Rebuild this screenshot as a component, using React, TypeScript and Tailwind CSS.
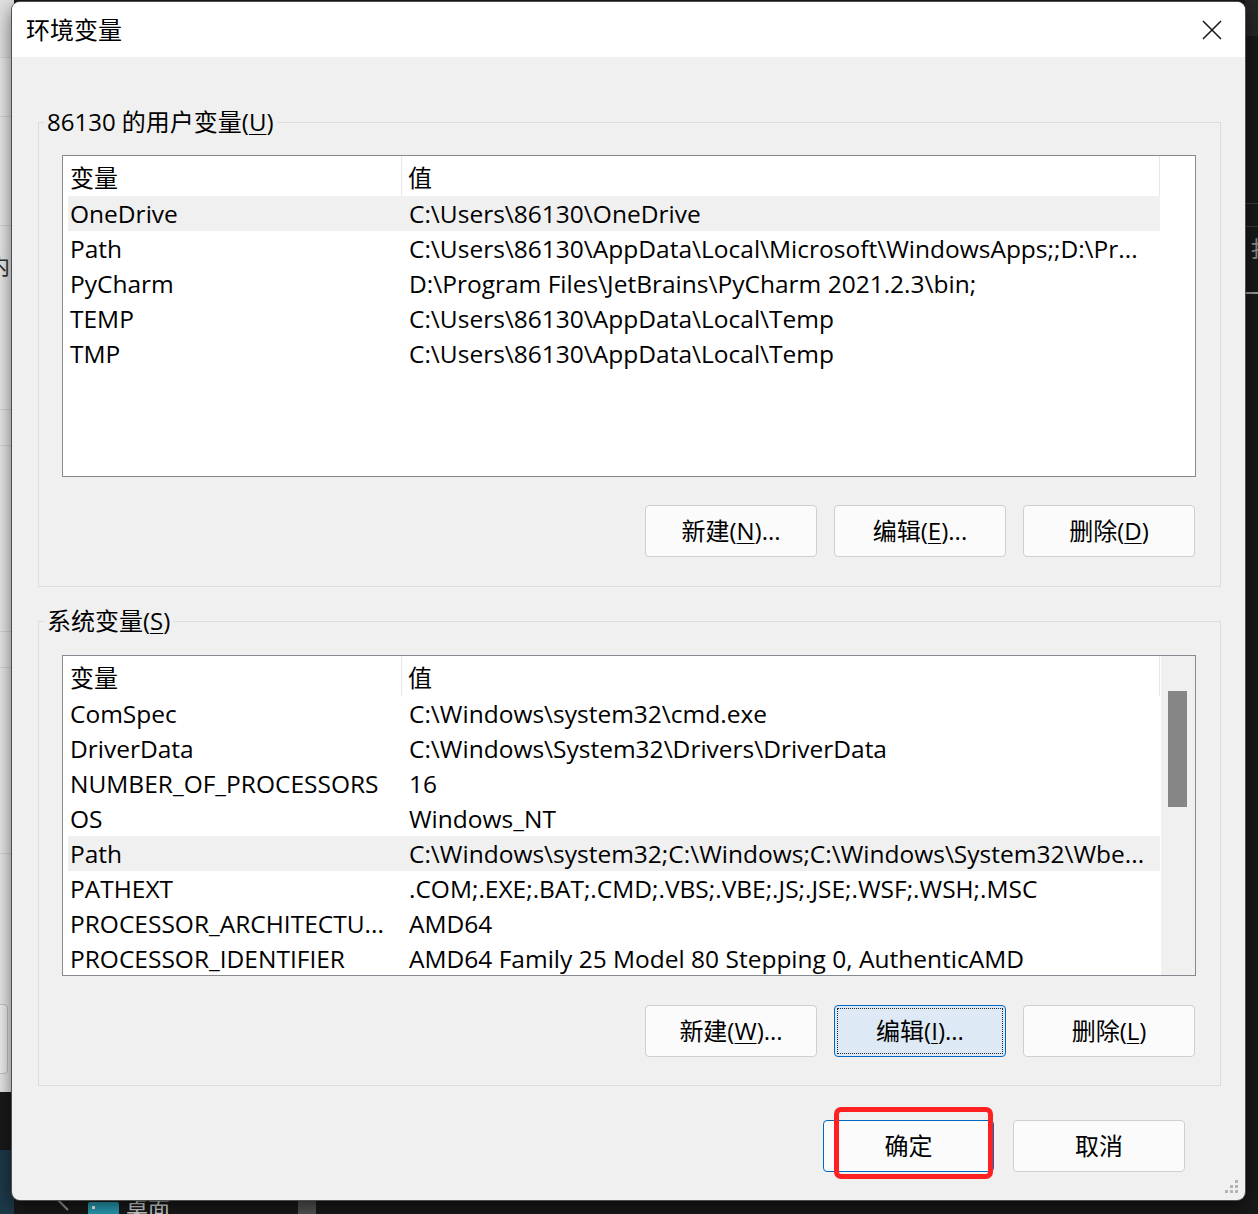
import React from 'react'

const ui = "font-['Open_Sans','Noto_Sans_CJK_SC',sans-serif]"

type Row = { name: string; value: string; selected?: boolean }

const userRows: Row[] = [
  { name: 'OneDrive', value: 'C:\\Users\\86130\\OneDrive', selected: true },
  { name: 'Path', value: 'C:\\Users\\86130\\AppData\\Local\\Microsoft\\WindowsApps;;D:\\Pr...' },
  { name: 'PyCharm', value: 'D:\\Program Files\\JetBrains\\PyCharm 2021.2.3\\bin;' },
  { name: 'TEMP', value: 'C:\\Users\\86130\\AppData\\Local\\Temp' },
  { name: 'TMP', value: 'C:\\Users\\86130\\AppData\\Local\\Temp' },
]

const systemRows: Row[] = [
  { name: 'ComSpec', value: 'C:\\Windows\\system32\\cmd.exe' },
  { name: 'DriverData', value: 'C:\\Windows\\System32\\Drivers\\DriverData' },
  { name: 'NUMBER_OF_PROCESSORS', value: '16' },
  { name: 'OS', value: 'Windows_NT' },
  { name: 'Path', value: 'C:\\Windows\\system32;C:\\Windows;C:\\Windows\\System32\\Wbe...', selected: true },
  { name: 'PATHEXT', value: '.COM;.EXE;.BAT;.CMD;.VBS;.VBE;.JS;.JSE;.WSF;.WSH;.MSC' },
  { name: 'PROCESSOR_ARCHITECTU...', value: 'AMD64' },
  { name: 'PROCESSOR_IDENTIFIER', value: 'AMD64 Family 25 Model 80 Stepping 0, AuthenticAMD' },
]

function Key({ children }: { children: React.ReactNode }) {
  return <span className="underline decoration-1 underline-offset-[3px]">{children}</span>
}

function Btn({
  children,
  kind = 'normal',
  width = 'w-[172px]',
}: {
  children: React.ReactNode
  kind?: 'normal' | 'focus' | 'default'
  width?: string
}) {
  const skin =
    kind === 'focus'
      ? 'border-[#0067c0] bg-[#dde9f4]'
      : kind === 'default'
        ? 'border-[#0067c0] bg-[#fbfbfb]'
        : 'border-[#cfcfcf] bg-[#fbfbfb]'
  return (
    <button
      className={`relative flex h-[52px] ${width} items-center justify-center rounded-[4px] border text-[24px] text-black ${skin}`}
    >
      {kind === 'focus' && (
        <span className="pointer-events-none absolute inset-[2px] border border-dotted border-[#222]" />
      )}
      <span>{children}</span>
    </button>
  )
}

function ListView({ rows, height, scroll = false }: { rows: Row[]; height: string; scroll?: boolean }) {
  return (
    <div className={`flex ${height} w-[1134px] overflow-hidden border border-[#858a91] bg-white`}>
      <div className="flex-1 pl-[5px]">
        <div className="w-[1092px]">
          <div className="flex h-[40px] items-center border-r border-[#e8e8e8] text-[24px]">
            <div className="flex h-full w-[334px] items-center border-r border-[#e8e8e8] pl-[2px] pt-[3px]">变量</div>
            <div className="pl-[6px] pt-[3px]">值</div>
          </div>
          {rows.map((r) => (
            <div
              key={r.name}
              className={`flex h-[35px] items-center whitespace-nowrap pt-[2px] text-[24.5px] ${r.selected ? 'bg-[#f0f0f0]' : ''}`}
            >
              <div className="w-[339px] pl-[2px]">{r.name}</div>
              <div className="pl-[2px]">{r.value}</div>
            </div>
          ))}
        </div>
      </div>
      {scroll && (
        <div className="w-[34px] shrink-0 bg-[#f0f0f0] pl-[7px] pt-[35px]">
          <div className="h-[116px] w-[19px] bg-[#868686]" />
        </div>
      )}
    </div>
  )
}

function Group({
  legend,
  children,
  className = '',
}: {
  legend: React.ReactNode
  children: React.ReactNode
  className?: string
}) {
  return (
    <fieldset className={`border border-[#dcdcdc] ${className}`}>
      <legend className="ml-[5px] px-[3px] text-[24px] leading-[30px]">{legend}</legend>
      {children}
    </fieldset>
  )
}

export default function App() {
  return (
    <div className={`relative h-[1214px] w-[1258px] overflow-hidden bg-[#191919] text-black ${ui}`}>
      {/* window behind, left */}
      <div className="absolute left-0 top-0 h-[1092px] w-[14px] overflow-hidden bg-[#eaeaea]">
        <div className="h-[58px] border-b border-[#d6d6d6] bg-[#e2e2e2]" />
        <div className="mt-[58px] border-t border-[#d6d6d6]" />
        <div className="relative mt-[108px] h-[60px] border-t border-[#d6d6d6]">
          <span className="absolute -left-[12px] top-[28px] text-[22px] leading-none text-[#333]">内</span>
        </div>
        <div className="mt-[124px] border-t border-[#d6d6d6]" />
        <div className="mt-[35px] border-t border-[#d6d6d6]" />
        <div className="mt-[185px] border-t border-[#d6d6d6]" />
        <div className="mt-[35px] border-t border-[#d6d6d6]" />
        <div className="mt-[185px] border-t border-[#d6d6d6]" />
        <div className="-ml-[4px] mt-[150px] h-[70px] w-[12px] rounded-[4px] border border-[#c4c4c4] bg-[#f2f2f2]" />
      </div>
      <div className="absolute left-0 top-[1150px] h-[64px] w-[14px] bg-[#1d3a4a]" />

      {/* window behind, right */}
      <div className="absolute right-0 top-0 h-[36px] w-[13px] bg-[#262626]" />
      <div className="absolute right-0 top-[203px] w-[13px] border-t border-[#3a3a3a]" />
      <div className="absolute right-0 top-[226px] h-[66px] w-[13px] overflow-hidden border-t border-[#3a3a3a]">
        <span className="absolute left-[5px] top-[10px] text-[22px] leading-none text-[#8a8a8a]">扌</span>
      </div>
      <div className="absolute right-0 top-[292px] h-[2px] w-[13px] bg-[#9a9a9a]" />

      {/* taskbar strip */}
      <div className="absolute left-[56px] top-[1204px] h-[2px] w-[14px] rotate-45 bg-[#9a9a9a]" />
      <div className="absolute left-[88px] top-[1202px] h-[14px] w-[31px] rounded-t-[2px] bg-[#2aa0b8]">
        <div className="ml-[4px] mt-[4px] h-[3px] w-[3px] bg-white" />
      </div>
      <span className="absolute left-[126px] top-[1197px] text-[22px] leading-none text-[#d8d8d8]">桌面</span>
      <div className="absolute left-[298px] top-[1200px] h-[14px] w-[18px] bg-[#555]" />

      {/* dialog */}
      <div className="absolute left-[12px] top-[2px] flex h-[1198px] w-[1233px] flex-col overflow-hidden rounded-[8px] bg-[#f0f0f0] shadow-[0_0_0_1px_#4f4f4f,0_6px_20px_rgba(0,0,0,0.6)]">
        <div className="flex h-[55px] shrink-0 items-center justify-between bg-white pl-[14px] pr-[23px]">
          <span className="text-[24px] leading-none">环境变量</span>
          <svg width="20" height="20" viewBox="0 0 20 20" aria-hidden>
            <path d="M1 1 L19 19 M19 1 L1 19" stroke="#1b1b1b" strokeWidth="1.6" />
          </svg>
        </div>

        <div className="relative flex-1 pl-[26px] pr-[24px] pt-[50px] text-[24px]">
          <Group
            legend={
              <>
                86130 的用户变量(<Key>U</Key>)
              </>
            }
          >
            <div className="pb-[29px] pl-[23px] pt-[18px]">
              <ListView rows={userRows} height="h-[322px]" />
              <div className="mt-[28px] flex w-[1133px] justify-end gap-[17px]">
                <Btn>
                  新建(<Key>N</Key>)...
                </Btn>
                <Btn>
                  编辑(<Key>E</Key>)...
                </Btn>
                <Btn>
                  删除(<Key>D</Key>)
                </Btn>
              </div>
            </div>
          </Group>

          <Group
            className="mt-[19px]"
            legend={
              <>
                系统变量(<Key>S</Key>)
              </>
            }
          >
            <div className="pb-[28px] pl-[23px] pt-[19px]">
              <ListView rows={systemRows} height="h-[321px]" scroll />
              <div className="mt-[29px] flex w-[1133px] justify-end gap-[17px]">
                <Btn>
                  新建(<Key>W</Key>)...
                </Btn>
                <Btn kind="focus">
                  编辑(<Key>I</Key>)...
                </Btn>
                <Btn>
                  删除(<Key>L</Key>)
                </Btn>
              </div>
            </div>
          </Group>

          <div className="mt-[34px] flex justify-end gap-[19px] pr-[36px]">
            <div className="relative">
              <Btn kind="default" width="w-[171px]">
                确定
              </Btn>
              <span className="pointer-events-none absolute left-[11px] top-[-13px] h-[72px] w-[159px] rounded-[7px] border-[5px] border-[#ff2121]" />
            </div>
            <Btn>取消</Btn>
          </div>

          {/* size grip */}
          <svg className="absolute bottom-[6px] right-[6px]" width="14" height="14" viewBox="0 0 14 14" aria-hidden>
            <rect x="10" y="0" width="3" height="3" fill="#b4b4b4" />
            <rect x="5" y="5" width="3" height="3" fill="#b4b4b4" />
            <rect x="10" y="5" width="3" height="3" fill="#b4b4b4" />
            <rect x="0" y="10" width="3" height="3" fill="#b4b4b4" />
            <rect x="5" y="10" width="3" height="3" fill="#b4b4b4" />
            <rect x="10" y="10" width="3" height="3" fill="#b4b4b4" />
          </svg>
        </div>
      </div>
    </div>
  )
}
